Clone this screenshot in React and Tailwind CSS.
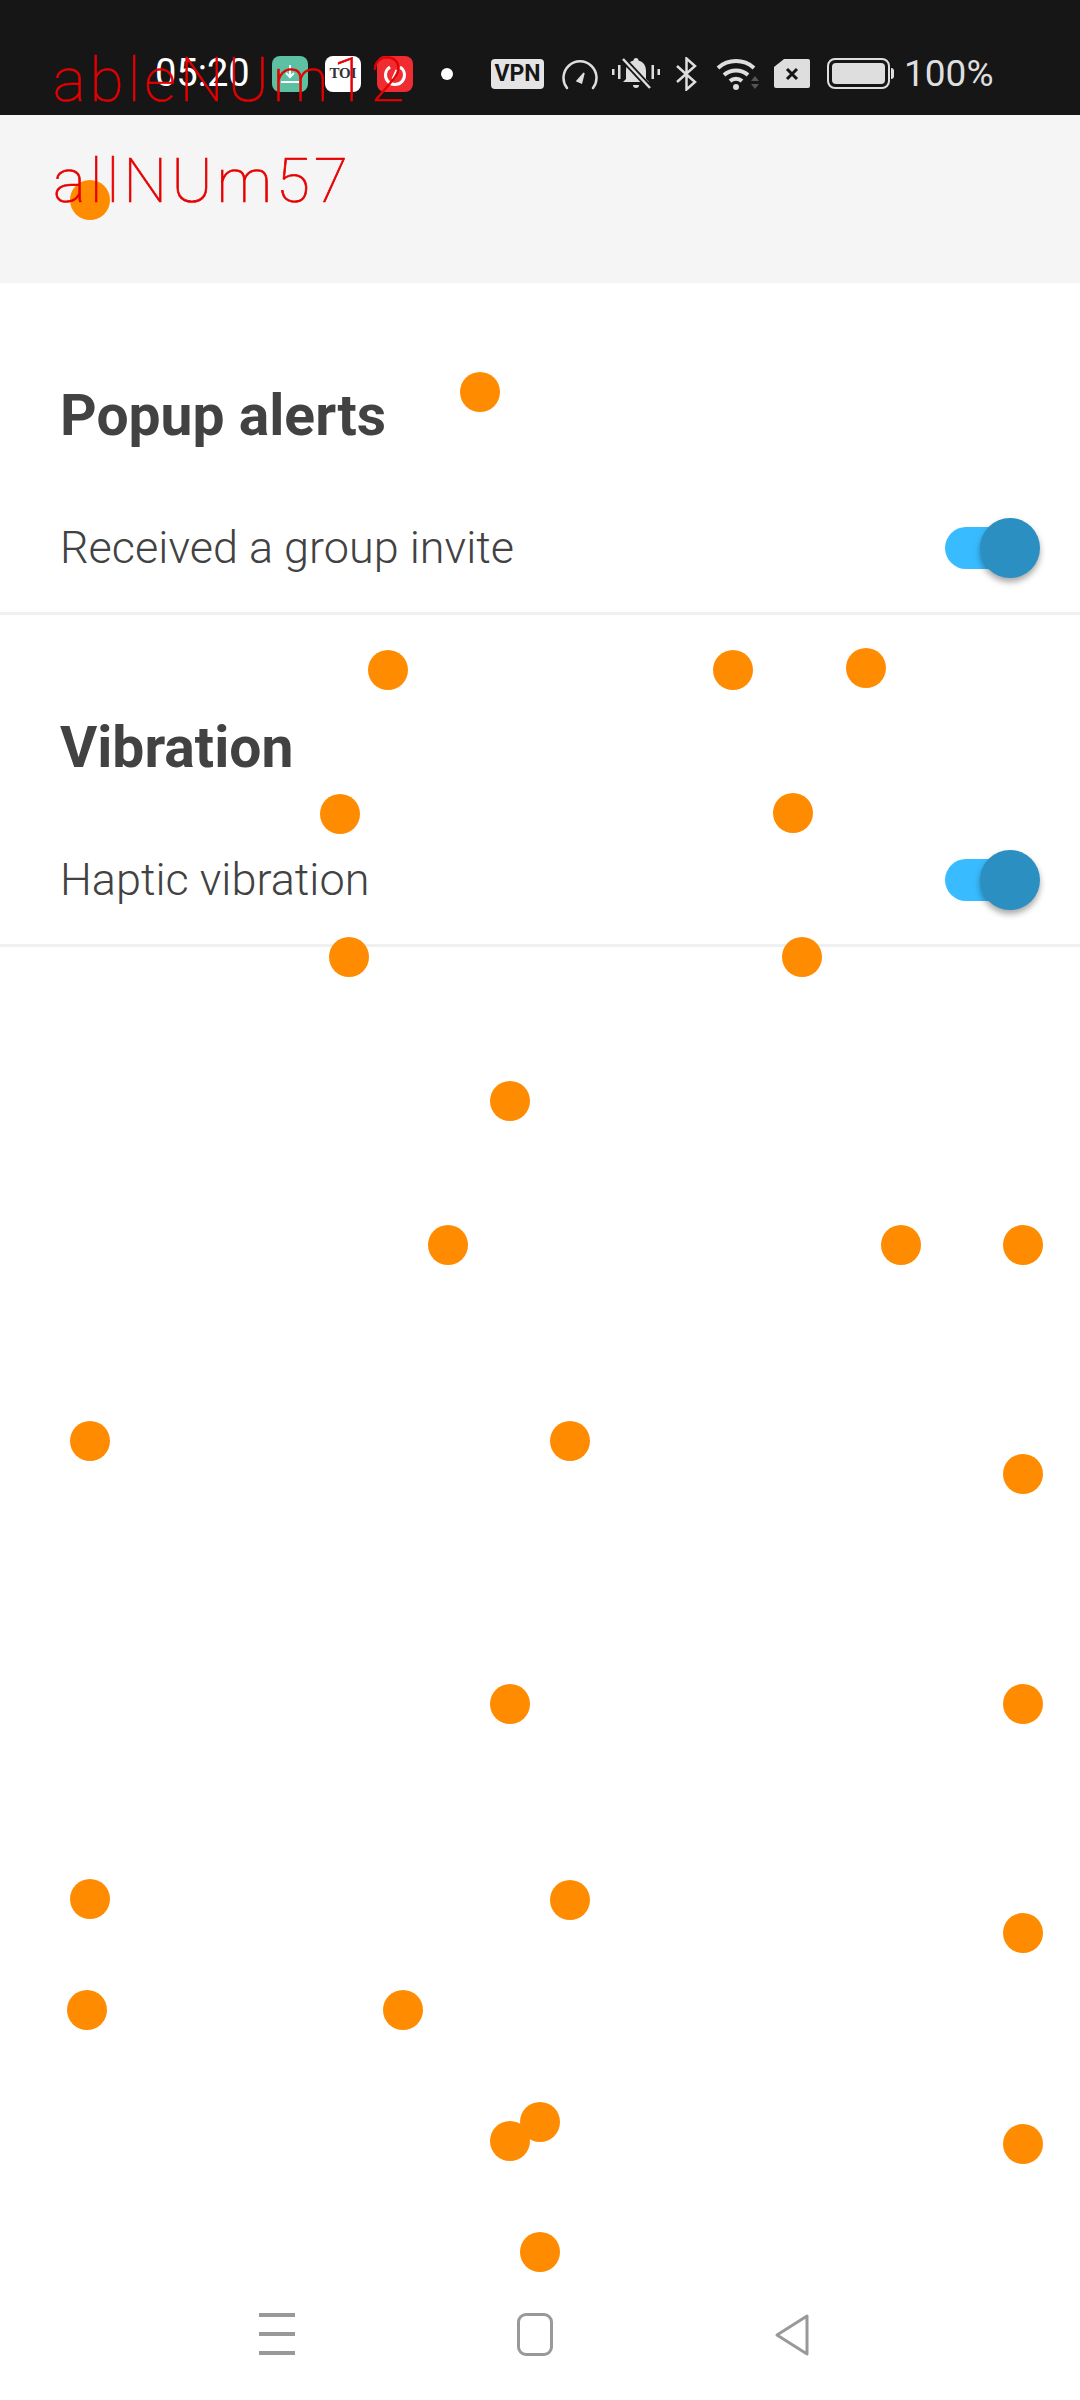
const dots = [
  [90, 200], [480, 392], [388, 670], [733, 670], [866, 668], [340, 814], [793, 813],
  [349, 957], [802, 957], [510, 1101], [448, 1245], [901, 1245], [1023, 1245], [90, 1441],
  [570, 1441], [1023, 1474], [510, 1704], [1023, 1704], [90, 1899], [570, 1900], [1023, 1933],
  [87, 2010], [403, 2010], [540, 2122], [510, 2141], [1023, 2144], [540, 2252],
];

function Toggle() {
  return (
    <div className="relative w-[95px] h-[60px] flex items-center">
      <div className="w-[80px] h-[42px] rounded-full bg-[#38bcff]" />
      <div className="absolute right-0 top-0 w-[60px] h-[60px] rounded-full bg-[#2b8fc2] shadow-[0_4px_6px_rgba(0,0,0,0.35)]" />
    </div>
  );
}

function Section({ title, label }) {
  return (
    <div className="h-[332px] border-b-[3px] border-[#f0f0f0] pl-[60px] pr-[40px] flex flex-col">
      <h2 className="mt-[101px] text-[57px] leading-[64px] font-bold text-[#424242]">{title}</h2>
      <div className="mt-[70px] flex items-center justify-between">
        <span className="text-[45px] leading-[60px] font-light text-[#424242]">{label}</span>
        <Toggle />
      </div>
    </div>
  );
}

function StatusBar() {
  return (
    <div className="h-[115px] bg-[#161616] flex items-center pt-[32px] pl-[155px] text-[#dedede] shrink-0">
      <span className="text-[38px] text-white w-[117px]">05:20</span>
      <div className="w-[36px] h-[36px] rounded-[8px] bg-[#5cc0a2] flex items-center justify-center">
        <svg width="24" height="24" viewBox="0 0 24 24" fill="none" stroke="#fff" strokeWidth="2">
          <path d="M12 3v12M8 11l4 4 4-4M3 20h18" />
        </svg>
      </div>
      <div className="ml-[17px] w-[36px] h-[36px] rounded-[8px] bg-white flex items-center justify-center text-[15px] font-bold text-[#333] font-['Liberation_Serif',serif]">
        TOI
      </div>
      <div className="ml-[16px] w-[36px] h-[36px] rounded-[8px] bg-[#ee2c32] flex items-center justify-center">
        <svg width="26" height="26" viewBox="0 0 26 26" fill="none" stroke="#fff" strokeWidth="3">
          <path d="M8 6a9.500 9.500 0 1 0 10 0M15 9l-4 9" />
        </svg>
      </div>
      <div className="ml-[28px] w-[12px] h-[12px] rounded-full bg-white" />
      <div className="ml-[38px] w-[53px] h-[30px] rounded-[4px] bg-[#e4e4e4] flex items-center justify-center text-[23px] leading-none font-bold text-[#161616]">
        VPN
      </div>
      <svg className="ml-[18px]" width="36" height="32" viewBox="0 0 36 32" fill="none" stroke="#dedede" strokeWidth="2.5" strokeLinecap="round">
        <path d="M5 30A16.500 16.500 0 1 1 31 30" />
        <path d="M15 23l7-8-2.500 10z" fill="#dedede" strokeWidth="1.5" />
      </svg>
      <svg className="ml-[14px]" width="48" height="34" viewBox="0 0 48 34" fill="#dedede">
        <path d="M24 1c-1.500 0-2.500 1-2.500 2.500C16 5 14 9 14 14v8l-3 3h26l-3-3v-8c0-5-2-9-7.500-10.500C26.500 2 25.500 1 24 1z" />
        <path d="M21 28h6a3 3 0 0 1-6 0z" />
        <rect x="0" y="12" width="2.500" height="6" />
        <rect x="6" y="8" width="2.500" height="14" />
        <rect x="39.500" y="8" width="2.500" height="14" />
        <rect x="45.500" y="12" width="2.500" height="6" />
        <path d="M11 2l27 29" stroke="#161616" strokeWidth="6" />
        <path d="M11 2l27 29" stroke="#dedede" strokeWidth="2.500" />
      </svg>
      <svg className="ml-[16px]" width="21" height="34" viewBox="0 0 21 34" fill="none" stroke="#dedede" strokeWidth="2.500">
        <path d="M1 9l18 16-8.500 7.500V1.500L19 9 1 25" />
      </svg>
      <svg className="ml-[19px]" width="44" height="34" viewBox="0 0 44 34" fill="none" stroke="#dedede" strokeWidth="4">
        <path d="M2 11a27 27 0 0 1 36 0" />
        <path d="M8 18a18 18 0 0 1 24 0" />
        <path d="M14 24a9 9 0 0 1 12 0" />
        <circle cx="20" cy="30" r="3" fill="#dedede" stroke="none" />
        <path d="M35 24l4-5 4 5zM35 27l4 5 4-5z" fill="#555" stroke="none" />
      </svg>
      <div className="ml-[14px] w-[36px] h-[29px] bg-[#dedede] rounded-[2px] [clip-path:polygon(28%_0,100%_0,100%_100%,0_100%,0_28%)] flex items-center justify-center">
        <svg width="14" height="14" viewBox="0 0 14 14" stroke="#161616" strokeWidth="3">
          <path d="M2 2l10 10M12 2L2 12" />
        </svg>
      </div>
      <div className="ml-[17px] w-[63px] h-[31px] rounded-[8px] border-2 border-[#dedede] p-[3px]">
        <div className="w-full h-full rounded-[4px] bg-[#dedede]" />
      </div>
      <div className="ml-[1px] w-[3px] h-[11px] rounded-r-sm bg-[#dedede]" />
      <span className="ml-[10px] text-[37px] text-[#dedede]">100%</span>
    </div>
  );
}

function NavBar() {
  return (
    <div className="h-[100px] shrink-0 flex items-start justify-between pt-[13px] pl-[259px] pr-[270px]">
      <div className="w-[36px] h-[42px] flex flex-col justify-between">
        <div className="h-[4px] bg-[#999]" />
        <div className="h-[4px] bg-[#999]" />
        <div className="h-[4px] bg-[#999]" />
      </div>
      <div className="w-[36px] h-[43px] rounded-[9px] border-[3px] border-[#999]" />
      <svg width="35" height="44" viewBox="0 0 35 44" fill="none" stroke="#999" strokeWidth="3" strokeLinejoin="round">
        <path d="M2 22L32 3v38z" />
      </svg>
    </div>
  );
}

export default function App() {
  return (
    <div className="relative w-[1080px] h-[2400px] bg-white overflow-hidden flex flex-col font-['Roboto',sans-serif]">
      <StatusBar />
      <div className="h-[168px] bg-[#f5f5f5] shrink-0" />
      <div className="flex-1">
        <Section title="Popup alerts" label="Received a group invite" />
        <Section title="Vibration" label="Haptic vibration" />
      </div>
      <NavBar />

      {dots.map(([x, y]) => (
        <div
          key={`${x}-${y}`}
          className="absolute w-[40px] h-[40px] rounded-full bg-[#ff8c00]"
          style={{ left: x - 20, top: y - 20 }}
        />
      ))}

      <span className="absolute left-[53px] top-[44px] text-[62px] leading-[72px] font-thin text-[#e60000] tracking-[4px] [-webkit-text-stroke:0.7px_#e60000]">
        ableNUm12
      </span>
      <span className="absolute left-[53px] top-[145px] text-[62px] leading-[72px] font-thin text-[#e60000] tracking-[4px] [-webkit-text-stroke:0.7px_#e60000]">
        allNUm57
      </span>
    </div>
  );
}
